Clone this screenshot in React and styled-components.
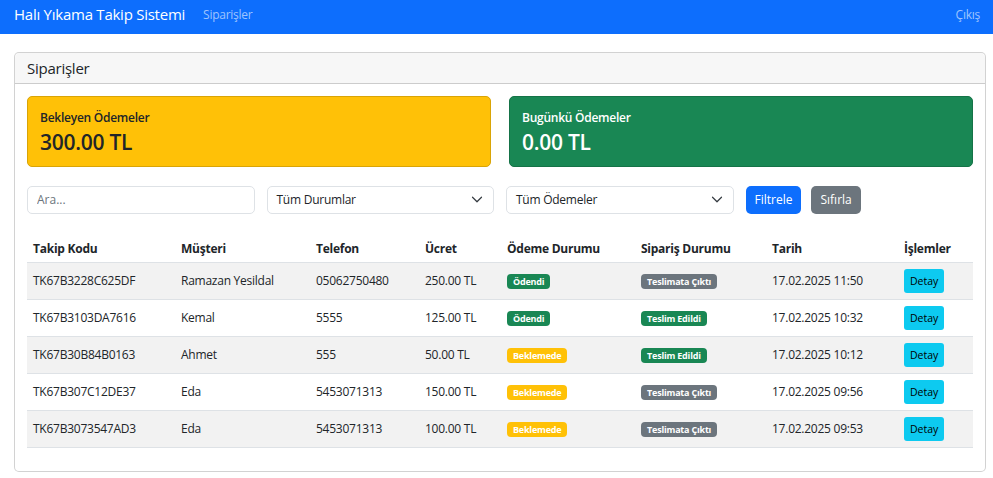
import React from "react";
import styled, { createGlobalStyle } from "styled-components";

const GlobalStyle = createGlobalStyle`
  * { box-sizing: border-box; }
  body {
    margin: 0;
    font-family: "Open Sans", "Noto Sans", sans-serif;
    font-size: 12px;
    line-height: 1.5;
    letter-spacing: -0.25px;
    color: #212529;
    background: #fff;
  }
`;

const orders = [
  { code: "TK67B3228C625DF", name: "Ramazan Yesildal", phone: "05062750480", fee: "250.00 TL", pay: "paid", status: "out", date: "17.02.2025 11:50" },
  { code: "TK67B3103DA7616", name: "Kemal", phone: "5555", fee: "125.00 TL", pay: "paid", status: "done", date: "17.02.2025 10:32" },
  { code: "TK67B30B84B0163", name: "Ahmet", phone: "555", fee: "50.00 TL", pay: "wait", status: "done", date: "17.02.2025 10:12" },
  { code: "TK67B307C12DE37", name: "Eda", phone: "5453071313", fee: "150.00 TL", pay: "wait", status: "out", date: "17.02.2025 09:56" },
  { code: "TK67B3073547AD3", name: "Eda", phone: "5453071313", fee: "100.00 TL", pay: "wait", status: "out", date: "17.02.2025 09:53" },
];

const payBadge = {
  paid: { text: "Ödendi", color: "#198754" },
  wait: { text: "Beklemede", color: "#ffc107" },
};

const statusBadge = {
  out: { text: "Teslimata Çıktı", color: "#6c757d" },
  done: { text: "Teslim Edildi", color: "#198754" },
};

const columns = [
  { label: "Takip Kodu", width: 148 },
  { label: "Müşteri", width: 135 },
  { label: "Telefon", width: 109 },
  { label: "Ücret", width: 82 },
  { label: "Ödeme Durumu", width: 134 },
  { label: "Sipariş Durumu", width: 131 },
  { label: "Tarih", width: 132 },
  { label: "İşlemler", width: 75 },
];

function Chevron() {
  return (
    <svg width="12" height="9" viewBox="0 0 16 12" fill="none">
      <path d="m2 3 6 6 6-6" stroke="#343a40" strokeWidth="1.6" strokeLinecap="round" strokeLinejoin="round" />
    </svg>
  );
}

export default function App() {
  return (
    <>
      <GlobalStyle />
      <Navbar>
        <Brand>Halı Yıkama Takip Sistemi</Brand>
        <NavLink>Siparişler</NavLink>
        <NavLink className="right">Çıkış</NavLink>
      </Navbar>

      <Page>
        <Card>
          <CardHeader>Siparişler</CardHeader>
          <CardBody>
            <StatRow>
              <StatCard $bg="#ffc107" $border="#d9a406" $color="#212529">
                <StatTitle>Bekleyen Ödemeler</StatTitle>
                <StatValue>300.00 TL</StatValue>
              </StatCard>
              <StatCard $bg="#198754" $border="#157347" $color="#fff">
                <StatTitle>Bugünkü Ödemeler</StatTitle>
                <StatValue>0.00 TL</StatValue>
              </StatCard>
            </StatRow>

            <FilterRow>
              <Input placeholder="Ara..." />
              <SelectBox>
                <span>Tüm Durumlar</span>
                <Chevron />
              </SelectBox>
              <SelectBox>
                <span>Tüm Ödemeler</span>
                <Chevron />
              </SelectBox>
              <ButtonGroup>
                <Button $bg="#0d6efd">Filtrele</Button>
                <Button $bg="#6c757d">Sıfırla</Button>
              </ButtonGroup>
            </FilterRow>

            <Table>
              <colgroup>
                {columns.map((c) => (
                  <col key={c.label} style={{ width: c.width }} />
                ))}
              </colgroup>
              <thead>
                <tr>
                  {columns.map((c) => (
                    <Th key={c.label}>{c.label}</Th>
                  ))}
                </tr>
              </thead>
              <tbody>
                {orders.map((o, i) => (
                  <Row key={o.code} $striped={i % 2 === 0}>
                    <Td>{o.code}</Td>
                    <Td>{o.name}</Td>
                    <Td>{o.phone}</Td>
                    <Td>{o.fee}</Td>
                    <Td>
                      <Badge $bg={payBadge[o.pay].color}>{payBadge[o.pay].text}</Badge>
                    </Td>
                    <Td>
                      <Badge $bg={statusBadge[o.status].color}>{statusBadge[o.status].text}</Badge>
                    </Td>
                    <Td>{o.date}</Td>
                    <Td>
                      <DetailButton>Detay</DetailButton>
                    </Td>
                  </Row>
                ))}
              </tbody>
            </Table>
          </CardBody>
        </Card>
      </Page>
    </>
  );
}

const Navbar = styled.nav`
  display: flex;
  align-items: center;
  height: 34px;
  padding: 0 13px 5px 14px;
  background: #0d6efd;
`;

const Brand = styled.span`
  font-size: 15px;
  line-height: 1;
  color: #fff;
  margin-right: 18px;
  margin-top: -1px;
`;

const NavLink = styled.span`
  font-size: 12px;
  line-height: 1;
  color: rgba(255, 255, 255, 0.6);

  &.right {
    margin-left: auto;
  }
`;

const Page = styled.main`
  padding: 18px 7px 0 14px;
`;

const Card = styled.section`
  border: 1px solid rgba(0, 0, 0, 0.175);
  border-radius: 5px;
  background: #fff;
`;

const CardHeader = styled.h5`
  margin: 0;
  padding: 6px 12px;
  font-size: 15px;
  font-weight: 500;
  line-height: 1.2;
  background: rgba(0, 0, 0, 0.03);
  border-bottom: 1px solid rgba(0, 0, 0, 0.175);
  border-radius: 5px 5px 0 0;
`;

const CardBody = styled.div`
  padding: 12px;
`;

const StatRow = styled.div`
  display: grid;
  grid-template-columns: 1fr 1fr;
  gap: 18px;
  margin-bottom: 19px;
`;

const StatCard = styled.div`
  padding: 14px 12px 10px;
  border: 1px solid ${(p) => p.$border};
  border-radius: 5px;
  background: ${(p) => p.$bg};
  color: ${(p) => p.$color};
`;

const StatTitle = styled.h6`
  margin: 0 0 5px;
  font-size: 12px;
  font-weight: 600;
  line-height: 1.2;
`;

const StatValue = styled.h3`
  margin: 0;
  font-size: 21px;
  font-weight: 600;
  line-height: 1.2;
`;

const FilterRow = styled.div`
  display: grid;
  grid-template-columns: repeat(4, 1fr);
  gap: 12px;
  margin-bottom: 18px;
`;

const Input = styled.input`
  height: 28px;
  padding: 4px 9px;
  border: 1px solid #dee2e6;
  border-radius: 5px;
  font: inherit;
  color: #212529;
  outline: none;

  &::placeholder {
    color: #6c757d;
  }
`;

const SelectBox = styled.div`
  display: flex;
  align-items: center;
  justify-content: space-between;
  height: 28px;
  padding: 0 10px 0 9px;
  border: 1px solid #dee2e6;
  border-radius: 5px;
  color: #212529;
`;

const ButtonGroup = styled.div`
  display: flex;
  gap: 10px;
`;

const Button = styled.button`
  height: 28px;
  padding: 0 9px;
  border: none;
  border-radius: 5px;
  font: inherit;
  color: #fff;
  background: ${(p) => p.$bg};
`;

const Table = styled.table`
  width: 100%;
  table-layout: fixed;
  border-collapse: collapse;
  margin-bottom: 11px;
`;

const Th = styled.th`
  padding: 8px 6px 4px;
  text-align: left;
  font-weight: 700;
  line-height: 18px;
  border-bottom: 1px solid #dee2e6;
`;

const Row = styled.tr`
  background: ${(p) => (p.$striped ? "#f2f2f2" : "#fff")};
`;

const Td = styled.td`
  padding: 6px;
  line-height: 18px;
  vertical-align: middle;
  border-bottom: 1px solid #dee2e6;
  white-space: nowrap;
`;

const Badge = styled.span`
  display: inline-block;
  padding: 3px 6px;
  border-radius: 4px;
  font-size: 9px;
  font-weight: 700;
  line-height: 1;
  letter-spacing: -0.2px;
  color: #fff;
  background: ${(p) => p.$bg};
  vertical-align: middle;
`;

const DetailButton = styled.button`
  display: block;
  height: 24px;
  padding: 0 6px;
  border: none;
  border-radius: 3px;
  font: inherit;
  font-size: 10.5px;
  color: #000;
  background: #0dcaf0;
`;
